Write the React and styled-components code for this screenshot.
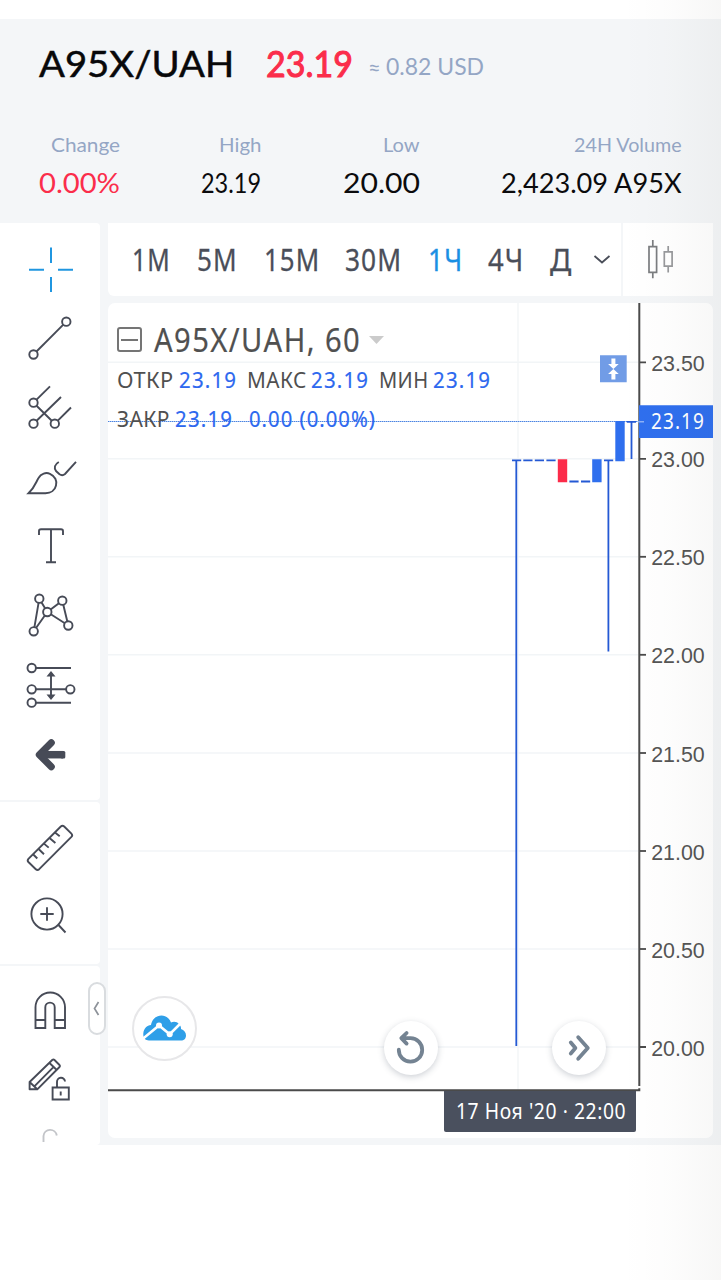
import React, { useLayoutEffect, useRef } from "react";
import styled, { createGlobalStyle } from "styled-components";

const Global = createGlobalStyle`
  * { box-sizing: border-box; }
  body { margin: 0; background: #fff; font-family: "Noto Sans", sans-serif; }
`;

const Page = styled.div`
  position: relative;
  width: 721px;
  height: 1280px;
  padding-top: 19px;
  overflow: hidden;
  background: #fff;
`;

const EdgeShade = styled.div`
  position: absolute;
  inset: 0 0 0 auto;
  width: 100px;
  pointer-events: none;
  background: linear-gradient(90deg, rgba(40, 35, 20, 0), rgba(40, 35, 20, 0.01) 50%, rgba(40, 35, 20, 0.035));
`;

/* Text squeezed or stretched horizontally to a given width */
const FitBox = styled.span`
  display: block;
  flex: none;
  width: ${(p) => p.$w}px;
  height: ${(p) => p.$line || p.$size}px;
  margin-left: ${(p) => p.$gap || 0}px;
  font-family: ${(p) => (p.$lato ? "Lato" : '"Noto Sans"')}, sans-serif;
  font-size: ${(p) => p.$size}px;
  line-height: ${(p) => p.$line || p.$size}px;
  font-weight: ${(p) => p.$weight || 400};
  letter-spacing: ${(p) => p.$track || 0}em;
  -webkit-text-stroke: ${(p) => p.$stroke || 0}px currentColor;
  color: ${(p) => p.$color};
  white-space: pre;
`;
const FitInner = styled.span`
  display: inline-block;
  transform-origin: 0 50%;
`;
function Fit({ children, w, ...rest }) {
  const ref = useRef(null);
  useLayoutEffect(() => {
    const el = ref.current;
    el.style.transform = `scaleX(${w / el.offsetWidth})`;
  }, [w, children]);
  return (
    <FitBox $w={w} {...rest}>
      <FitInner ref={ref}>{children}</FitInner>
    </FitBox>
  );
}

const Header = styled.header`
  height: 203px;
  background: #f4f6f8;
`;
const TitleRow = styled.div`
  display: flex;
  align-items: flex-start;
  height: 111px;
  padding: 25px 0 0 39px;
`;
const Stats = styled.div`
  display: flex;
  justify-content: space-between;
  padding: 3px 39px 0 38.5px;
`;
const Stat = styled.div`
  display: flex;
  flex-direction: column;
  align-items: flex-end;
  gap: 9px;
`;

const Body = styled.main`
  display: flex;
  height: 923px;
  padding-top: 1px;
  background: #f4f6f8;
`;
const Sidebar = styled.nav`
  position: relative;
  width: 100px;
  display: flex;
  flex-direction: column;
  gap: 2px;
`;
const ToolGroup = styled.div`
  flex: none;
  height: ${(p) => p.$h}px;
  padding-top: ${(p) => p.$pad}px;
  overflow: hidden;
  background: #fff;
  border-radius: 0 4px 4px 0;
`;
const ToolIcon = styled.svg`
  display: block;
  width: 100px;
  height: 69px;
  fill: none;
  stroke: #474b57;
  stroke-width: 1.9;
`;
const Handle = styled.button`
  position: absolute;
  left: 88px;
  top: 759px;
  width: 17.5px;
  height: 53px;
  padding: 0;
  border: 2px solid #d9dcdf;
  border-radius: 9px;
  background: #fff;
  display: grid;
  place-items: center;
`;

const Main = styled.section`
  display: flex;
  flex-direction: column;
  gap: 7px;
  width: 605px;
  margin-left: 8px;
`;
const TopBar = styled.div`
  display: flex;
  gap: 2px;
  height: 73px;
`;
const Frames = styled.div`
  display: flex;
  width: 513px;
  padding: 18px 0 0 24px;
  background: #fff;
  border-radius: 0 0 0 6px;
`;
const Chevron = styled.svg`
  width: 18px;
  height: 12px;
  margin: 13px 0 0 21px;
`;
const StyleButton = styled.div`
  width: 90px;
  background: #fff;
`;
const ChartPanel = styled.div`
  position: relative;
  height: 835px;
  background: #fff;
  border-radius: 7px;
  overflow: hidden;
`;
const ChartSvg = styled.svg`
  display: block;
  width: 605px;
  height: 835px;
`;
const Legend = styled.div`
  position: absolute;
  left: 9px;
  top: 16px;
`;
const LegendRow = styled.div`
  display: flex;
  height: ${(p) => p.$h}px;
`;
const Collapse = styled.div`
  width: 25px;
  height: 25px;
  margin-top: 8px;
  border: 2px solid #757575;
  border-radius: 3px;
  display: grid;
  place-items: center;
  &::after {
    content: "";
    width: 17px;
    height: 2px;
    background: #757575;
  }
`;
const Caret = styled.div`
  margin: 17px 0 0 8px;
  width: 15px;
  height: 8px;
  background: #cbcbcb;
  clip-path: polygon(0 0, 100% 0, 50% 100%);
`;
const Round = styled.div`
  position: absolute;
  left: ${(p) => p.$x}px;
  top: ${(p) => p.$y}px;
  width: ${(p) => p.$d}px;
  height: ${(p) => p.$d}px;
  border-radius: 50%;
  background: #fff;
  border: ${(p) => (p.$ring ? "2px solid #e7e7e9" : "none")};
  box-shadow: ${(p) => (p.$ring ? "none" : "0 2px 6px rgba(60,70,90,.25)")};
  display: grid;
  place-items: center;
`;
const TimeBadge = styled.div`
  position: absolute;
  left: 336px;
  top: 788px;
  width: 192px;
  height: 41px;
  padding: 6px 0 0 11px;
  border-radius: 0 0 2px 2px;
  background: #4a505e;
`;

const muted = "#94a6c5";
const stats = [
  ["Change", 69, "0.00%", 81, "#fb2d4b"],
  ["High", 42, "23.19", 60, "#0b0b0d"],
  ["Low", 37, "20.00", 77, "#0b0b0d"],
  ["24H Volume", 108, "2,423.09 A95X", 181, "#0b0b0d"],
];

const frames = [
  ["1М", 39, 0], ["5М", 41, 26], ["15М", 56, 26], ["30М", 57, 25],
  ["1Ч", 35, 26, true], ["4Ч", 36, 25], ["Д", 22, 26],
];

const dot = (x, y) => <circle key={`${x}-${y}`} cx={x} cy={y} r="4.2" fill="#fff" />;

const drawTools = [
  <path stroke="#2096e0" strokeWidth="2" d="M51 247.5V263M51 277V292M29 269.7H44M58 269.7H73" />,
  <><path d="M33.5 354.5 66.3 321.7" />{dot(33.5, 354.5)}{dot(66.3, 321.7)}</>,
  <><path d="M33.5 402.7 50 386.3M33.5 423.7 61 397M54.8 423.7 71 407.5M33.5 402.7 54.8 423.7" />{dot(33.5, 402.7)}{dot(33.5, 423.7)}{dot(54.8, 423.7)}</>,
  <><path d="M28.5 493.3C35 487 36 482 38.5 478C41 473.5 46 472 50 473.8C55 476 57.3 481 56 485.5C55 490 51 493.3 45.5 493.3Z" /><path d="M58.8 462C54.5 464.5 53.8 468 56 471L59.5 474.3C61.5 475.6 63.5 475.3 65 474L76 461.8" /></>,
  <path d="M39 535V531Q39 529.2 41 529.2H61Q63 529.2 63 531V535M51 529.2V562.3M46 562.3H56" />,
  <><path d="M33.7 631.3 39.3 598.7 47.3 612ZM47.3 612 62.3 600.7 68.3 625.5Z" />{dot(39.3, 598.7)}{dot(62.3, 600.7)}{dot(47.3, 612)}{dot(33.7, 631.3)}{dot(68.3, 625.5)}</>,
  <><path d="M32 668H71M32 689.3H70M32 702.7H71M51 675V697" />{dot(31.7, 668)}{dot(31.7, 689.3)}{dot(70.3, 689.3)}{dot(31.7, 702.7)}<path fill="#474b57" stroke="none" d="M51 671 55.5 676.5H46.5ZM51 700 55.5 694.5H46.5Z" /></>,
  <><path strokeWidth="7" strokeLinecap="round" strokeLinejoin="round" d="M51.3 742.7 39.3 754.7 51.3 766.7" /><path strokeWidth="7.5" d="M40 754.7H63" /><path strokeWidth="3" strokeLinejoin="round" d="M62 752.4H63.8V757H62Z" /></>,
];
const measureTools = [
  <><path strokeLinejoin="round" d="M60.8 826.5Q62.5 825 64.2 826.5L71.4 833.6Q73 835.2 71.4 836.9L39.2 869.2Q37.5 870.8 35.8 869.2L28.4 862Q27 860.5 28.4 858.8Z" /><path d="M33.3 854.5 37.3 858.5M38.6 849 44 854.2M44 843.6 48.7 847.6M49.5 838 55.4 843M55 832.5 59.7 836.2" /></>,
  <><circle cx="47" cy="914" r="15.6" /><path d="M58.5 925 65.5 932.5M47 907.3V920.7M40.3 914H53.7" /></>,
];
const lockTools = [
  <path d="M35.5 1028V1007.3A14.75 14.75 0 0 1 65 1007.3V1028H54.7V1007.3A4.7 4.7 0 0 0 45.3 1007.3V1028ZM35.5 1020H45.3M54.7 1020H65" />,
  <><path strokeLinejoin="round" d="M29.6 1089.3V1082L52.5 1059.8Q53.5 1059 54.5 1060L59.5 1065Q60.5 1066 59.5 1067L37.3 1089.3ZM29.6 1082 37.3 1089.3M49.5 1063 56.8 1070M34.6 1086.2 53.2 1067.3" /><path d="M52.6 1087.5H68.8V1099.5H52.6ZM57 1087.5V1082A4 4 0 0 1 65 1081.5M60.7 1091.5V1095.5" /></>,
  <path stroke="#c3c5c9" d="M43.5 1142V1136A6.7 6.7 0 0 1 56.8 1135.5" />,
];

function Tools({ items, top }) {
  return items.map((g, i) => (
    <ToolIcon key={i} viewBox={`0 ${top + i * 69} 100 69`}>{g}</ToolIcon>
  ));
}

const prices = [
  ["23.50", 362.3], ["23.00", 458.8], ["22.50", 556.8], ["22.00", 654.8],
  ["21.50", 753], ["21.00", 851], ["20.50", 949], ["20.00", 1047],
];
const dashes = [[512, 460.3], [523.3, 460.3], [534.8, 460.3], [546.4, 460.3], [569.4, 481.5], [581, 481.5], [604, 460.3], [626.8, 421.8]];

function Chart() {
  return (
    <ChartSvg viewBox="108 303 605 835">
      <g stroke="#f2f5f7" strokeWidth="1.4">
        <path d="M518 303V1090" />
        {prices.map(([p, y]) => <path key={p} d={`M108 ${y}H638`} />)}
      </g>
      <path d="M108 421.5H638" stroke="#a9c6f3" strokeWidth="1" />
      <path d="M108 421.5H638" stroke="#4d84e0" strokeWidth="1" strokeDasharray="1 1" />
      <g stroke="#2459d4" strokeWidth="1.8">
        <path d="M516.3 460V1046M608.4 460V651.5M631.5 421V459" />
        {dashes.map(([x, y]) => <path key={x} d={`M${x} ${y}h9.2`} />)}
      </g>
      <path fill="#fc2b49" d="M557.8 459.3h9.4v23h-9.4z" />
      <path fill="#2f6fee" d="M592.2 459.3h9.4v23h-9.4zM615.3 421h9.4v40.3h-9.4z" />
      <path stroke="#4a4a4a" strokeWidth="2" d="M639.3 303V1086M108 1090.3H640M639.3 1088.2V1091.2" />
      <g stroke="#4a4a4a" strokeWidth="1.8">
        {prices.map(([p, y]) => <path key={p} d={`M640 ${y}h6`} />)}
      </g>
      <g fill="#555" fontFamily="Liberation Sans, Arial, sans-serif" fontSize="21.3">
        {prices.map(([p, y]) => (
          <text key={p} x="651.2" y={y + 8.6} textLength="53.5" lengthAdjust="spacingAndGlyphs">{p}</text>
        ))}
      </g>
      <path fill="#2f6fee" d="M639 405.3H713V438H639Z" />
      <path stroke="#8eb1f6" strokeWidth="1.5" d="M638 421.7h6" />
      <text x="651" y="428.7" fill="#fff" fontFamily="Noto Sans, sans-serif" fontSize="21" letterSpacing="1.2" textLength="54" lengthAdjust="spacingAndGlyphs">23.19</text>
      <path fill="#719ce6" d="M600 355.3H626.7V382.3H600Z" />
      <path fill="#fff" d="M611.4 358.5h4v5.5h3.3l-5.3 5-5.3-5h3.3zM611.4 379.5h4v-5.5h3.3l-5.3-5-5.3 5h3.3z" />
    </ChartSvg>
  );
}

const blue = "#2d68ef";
const ink = "#505050";

export default function App() {
  return (
    <Page>
      <Global />
      <Header>
        <TitleRow>
          <Fit w={195} $lato $size={37.5} $stroke={0.5} $color="#08080a">A95X/UAH</Fit>
          <Fit w={87} $lato $size={37.5} $stroke={1.1} $gap={32} $color="#fb2d4b">23.19</Fit>
          <Fit w={13} $lato $size={22} $line={45} $gap={15} $color={muted}>≈</Fit>
          <Fit w={98} $lato $size={22.5} $line={45} $gap={5} $color={muted}>0.82 USD</Fit>
        </TitleRow>
        <Stats>
          {stats.map(([label, lw, value, vw, color]) => (
            <Stat key={label}>
              <Fit w={lw} $lato $size={19} $line={24} $color={muted}>{label}</Fit>
              <Fit w={vw} $lato $size={27} $line={34} $color={color}>{value}</Fit>
            </Stat>
          ))}
        </Stats>
      </Header>
      <Body>
        <Sidebar>
          <ToolGroup $h={577} $pad={12}><Tools items={drawTools} top={235} /></ToolGroup>
          <ToolGroup $h={162} $pad={11}><Tools items={measureTools} top={813} /></ToolGroup>
          <ToolGroup $h={179} $pad={10}><Tools items={lockTools} top={976} /></ToolGroup>
          <Handle aria-label="Collapse">
            <svg width="7" height="15" fill="none" stroke="#8d9299" strokeWidth="1.7"><path d="M5.5 1 1.5 7.5l4 6.5" /></svg>
          </Handle>
        </Sidebar>
        <Main>
          <TopBar>
            <Frames>
              {frames.map(([t, w, gap, on]) => (
                <Fit key={t} w={w} $size={30.5} $line={37} $gap={gap} $track={0.04} $stroke={0.3} $color={on ? "#1a8fe3" : "#4a4e59"}>{t}</Fit>
              ))}
              <Chevron viewBox="0 0 18 12" fill="none" stroke="#4a4e59" strokeWidth="1.8"><path d="M1.5 2 9 8.5 16.5 2" /></Chevron>
            </Frames>
            <StyleButton>
              <svg width="90" height="73" viewBox="623 223 90 73" fill="none" stroke="#7b7d80" strokeWidth="1.7">
                <path d="M649 246.7h7.6v25.6h-7.6zM652.8 240v6.7M652.8 272.3v6" />
                <path stroke="#98999c" d="M664.3 251.8h7.8v14.4h-7.8zM668.2 246v5.8M668.2 266.2v6.3" />
              </svg>
            </StyleButton>
          </TopBar>
          <ChartPanel>
            <Chart />
            <Legend>
              <LegendRow $h={45}>
                <Collapse />
                <Fit w={207} $size={32.5} $line={42} $gap={12} $track={0.05} $stroke={0.2} $color={ink}>A95X/UAH, 60</Fit>
                <Caret />
              </LegendRow>
              <LegendRow $h={39}>
                <Fit w={57} $size={22.5} $line={32} $track={0.02} $color={ink}>ОТКР</Fit>
                <Fit w={58} $size={22.5} $line={32} $gap={5} $track={0.06} $stroke={0.2} $color={blue}>23.19</Fit>
                <Fit w={60} $size={22.5} $line={32} $gap={10} $track={0.02} $color={ink}>МАКС</Fit>
                <Fit w={58} $size={22.5} $line={32} $gap={4} $track={0.06} $stroke={0.2} $color={blue}>23.19</Fit>
                <Fit w={50} $size={22.5} $line={32} $gap={10} $track={0.02} $color={ink}>МИН</Fit>
                <Fit w={58} $size={22.5} $line={32} $gap={4} $track={0.06} $stroke={0.2} $color={blue}>23.19</Fit>
              </LegendRow>
              <LegendRow $h={38}>
                <Fit w={53} $size={22.5} $line={32} $track={0.02} $color={ink}>ЗАКР</Fit>
                <Fit w={58} $size={22.5} $line={32} $gap={5} $track={0.06} $stroke={0.2} $color={blue}>23.19</Fit>
                <Fit w={127} $size={22.5} $line={32} $gap={16} $track={0.05} $stroke={0.2} $color={blue}>0.00 (0.00%)</Fit>
              </LegendRow>
            </Legend>
            <Round $x={24} $y={693} $d={65} $ring>
              <svg width="44" height="27" viewBox="143 1014.5 44 27">
                <path fill="#2f9fe8" d="M149 1040C145 1040 143 1037 143.3 1033C143.6 1028 147 1025 151 1024.5C152 1019 156 1015 161.5 1015C166 1015 169.5 1018 171 1022C174 1020.8 177 1021.3 179 1023.5C181 1025.5 181 1027 181 1028.5C184 1029.5 186 1032 186 1035C186 1038 184 1040 181 1040Z" />
                <path fill="none" stroke="#fff" strokeWidth="2.6" d="M142.5 1038.5 159 1025 169.7 1033.7 184.5 1019" />
                <g fill="#fff"><circle cx="159" cy="1025" r="3" /><circle cx="169.7" cy="1033.7" r="3" /></g>
              </svg>
            </Round>
            <Round $x={275.5} $y={717.5} $d={54.5}>
              <svg width="54" height="54" viewBox="384 1021 54 54" fill="none" stroke="#748392" strokeWidth="3.8" strokeLinecap="round" strokeLinejoin="round">
                <path d="M398.8 1049.7A11.7 11.7 0 1 0 410.5 1038.2H402.5M406.6 1033 401.3 1038.2 406.6 1043.6" />
              </svg>
            </Round>
            <Round $x={443.5} $y={717.5} $d={54.5}>
              <svg width="54" height="54" viewBox="552 1021 54 54" fill="none" stroke="#748392" strokeWidth="3.8" strokeLinecap="round" strokeLinejoin="round">
                <path d="M570.8 1042.5 575.4 1048 570.8 1053.5M578.2 1037.2 587.8 1048 578.2 1058.8" />
              </svg>
            </Round>
            <TimeBadge>
              <Fit w={170} $size={21} $line={29} $gap={0.5} $track={0.03} $color="#fff">17 Ноя '20 · 22:00</Fit>
            </TimeBadge>
          </ChartPanel>
        </Main>
      </Body>
      <EdgeShade />
    </Page>
  );
}
